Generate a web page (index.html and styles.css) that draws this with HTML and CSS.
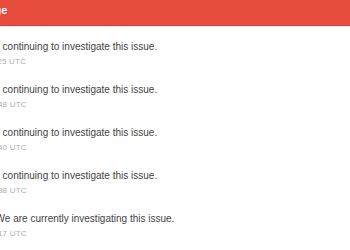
FILE: index.html
```html
<!DOCTYPE html>
<html lang="en">
<head>
    <meta charset="UTF-8">
    <title>Incident</title>
    <link rel="stylesheet" href="styles.css">
</head>
<body>
    <div class="incident">
        <div class="incident-header">
            <span class="incident-title">Major Outage</span>
        </div>

        <div class="updates">
            <div class="update">
                <div class="update-body"><strong>Update</strong> - We are continuing to investigate this issue.</div>
                <small class="update-time">Mar 14, 2017 - 11:25 UTC</small>
            </div>
            <div class="update">
                <div class="update-body"><strong>Update</strong> - We are continuing to investigate this issue.</div>
                <small class="update-time">Mar 14, 2017 - 10:48 UTC</small>
            </div>
            <div class="update">
                <div class="update-body"><strong>Update</strong> - We are continuing to investigate this issue.</div>
                <small class="update-time">Mar 14, 2017 - 10:40 UTC</small>
            </div>
            <div class="update">
                <div class="update-body"><strong>Update</strong> - We are continuing to investigate this issue.</div>
                <small class="update-time">Mar 14, 2017 - 10:38 UTC</small>
            </div>
            <div class="update">
                <div class="update-body"><strong>Investigating</strong> - We are currently investigating this issue.</div>
                <small class="update-time">Mar 14, 2017 - 10:17 UTC</small>
            </div>
        </div>
    </div>
</body>
</html>
```

FILE: styles.css
```css
body {
    margin: 0;
    overflow: hidden;
    background-color: white;
    font-family: "Liberation Sans", Arial, sans-serif;
    color: #444;
}
.incident {
    margin-left: -75px;
    width: 500px;
}
.incident-header {
    height: 25px;
    padding-left: 12px;
    background-color: #e74c3c;
    border-bottom: 1px solid #d0473a;
    box-shadow: 0 1px 0 #e6e6e6;
}
.incident-title {
    color: white;
    font-weight: bold;
    font-size: 11px;
    line-height: 20px;
}
.updates {
    padding-top: 6px;
}
.update {
    padding: 7px 0;
}
.update-body {
    font-size: 10px;
    line-height: 15px;
}
.update-body strong {
    font-weight: bold;
}
.update-time {
    display: block;
    margin-top: 2px;
    padding-left: 4px;
    font-size: 8px;
    line-height: 12px;
    color: #adadad;
    letter-spacing: 0.2px;
}
```
